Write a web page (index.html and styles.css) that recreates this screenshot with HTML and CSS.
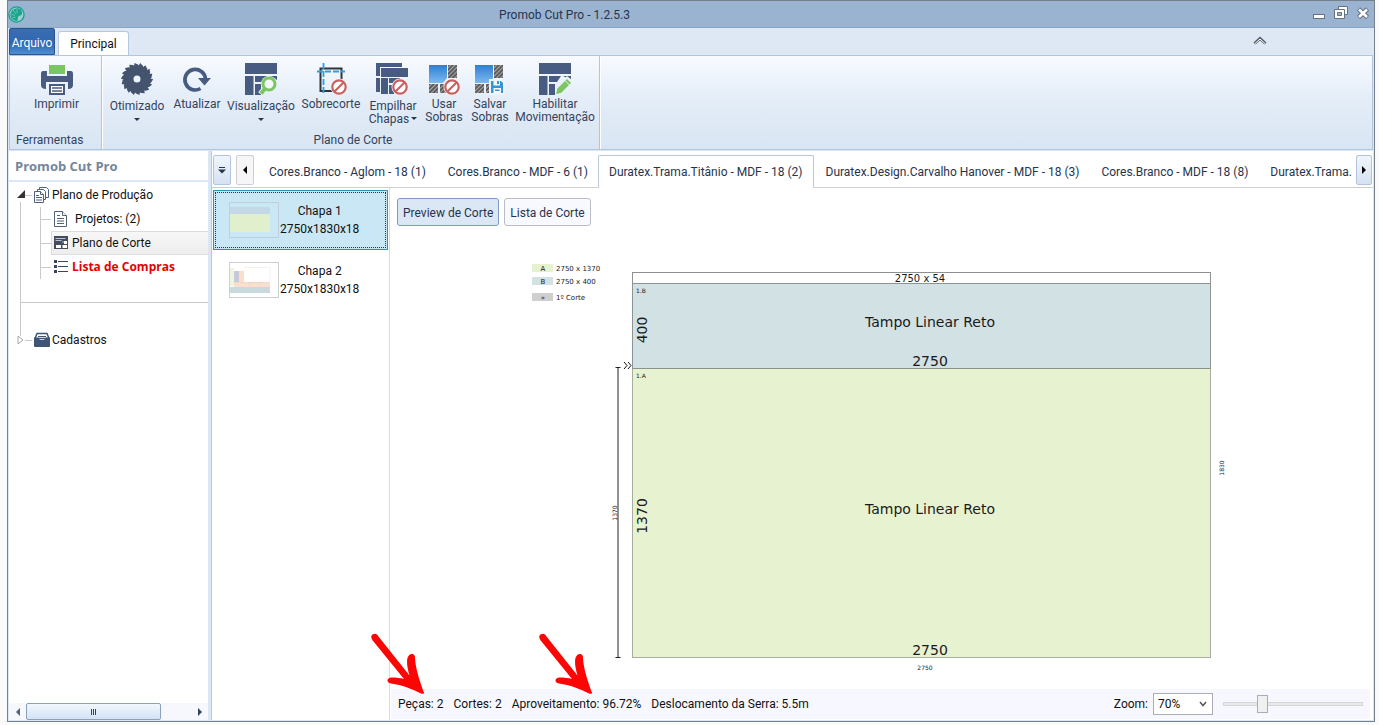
FILE: index.html
```html
<!DOCTYPE html>
<html lang="pt-BR">
<head>
<meta charset="utf-8">
<title>Promob Cut Pro - 1.2.5.3</title>
<link rel="stylesheet" href="styles.css">
</head>
<body>
<svg class="defs" aria-hidden="true">
  <defs>
    <linearGradient id="blue" x1="0" y1="0" x2="0" y2="1"><stop offset="0" stop-color="#2f7fd0"/><stop offset="1" stop-color="#7db9f0"/></linearGradient>
    <pattern id="hatch" width="3" height="3" patternUnits="userSpaceOnUse" patternTransform="rotate(45)"><rect width="3" height="3" fill="#aaa"/><rect width="2" height="3" fill="#5c5c5c"/></pattern>
    <path id="tooth" d="M-3 -12.5 L-2.5 -16 L1 -14.5 L3 -12Z"/>
    <g id="deny"><circle cx="24" cy="24" r="8.5" fill="#f3f7fc"/><circle cx="24" cy="24" r="6.7" fill="#fff" stroke="#c96060" stroke-width="2.2"/><path d="M19.5 28.5 28.5 19.5" stroke="#c96060" stroke-width="2.2"/></g>
    <g id="scraps"><path d="M1 2h18v13l-4 5H1z" fill="url(#blue)"/><path d="M20 2h9v13h-9zM1 21h9v9H1zM12 21h7v9h-7z" fill="url(#hatch)"/></g>
    <g id="boards"><path d="M0 0H32V11H0ZM0 13H8.500V32H0ZM10 13H22L18 19H10ZM10 21H16V32H10ZM24 13H32V17Z" fill="#475c80"/></g>
    <path id="arrow" d="M3.500 3.500C6.500 2 8 3 9.500 5.500L40.500 44.500C38 36 37 28 39.500 25C42 21.500 46.500 23 46 27C46.500 36 49 45 54.500 60.500C56 63 54 63.500 51 62C43 58 33 54 22 52.500C17 51.500 17.500 47 22.500 46.500C27 46.500 32 47 35 48L4.500 10.500C2 7.500 1.500 5 3.500 3.500Z" fill="#fb0505"/>
  </defs>
</svg>
<div class="window">
  <header class="titlebar">
    <svg class="logo" width="17" height="17" viewBox="0 0 17 17"><circle cx="8.500" cy="8.500" r="7.600" fill="#9fd0cf" stroke="#16a08d" stroke-width="1.300"/><path d="M8 2.500C12 1.500 15 5 14 8C13.500 10 11 9 10 11L9.500 15C4 15 2 11 2.500 8C3 5 5 3 8 2.500Z" fill="#1ba690"/><path d="M5 4 8 8M3 8 7 9.500M4 12 7.500 11M9 3V7" stroke="#9fd0cf" stroke-width=".6"/></svg>
    <h1 class="title">Promob Cut Pro - 1.2.5.3</h1>
    <div class="winbtns">
      <button aria-label="Minimizar"><svg width="14" height="14"><rect x="1.500" y="8.500" width="11" height="4" fill="#fff" stroke="#66727f"/></svg></button>
      <button aria-label="Restaurar"><svg width="14" height="14"><path d="M4.500.5h9v8h-9z" fill="#fff" stroke="#66727f"/><path d="M.5 3.500h10v9H.5z" fill="#fff" stroke="#66727f"/><path d="M3.500 6.500h4v3h-4z" fill="#9ab3d0" stroke="#66727f"/></svg></button>
      <button aria-label="Fechar"><svg width="14" height="14"><path d="M2.500 3 11.500 11.500M11.500 3 2.500 11.500" stroke="#66727f" stroke-width="4.500"/><path d="M3 3.500 11 11M11 3.500 3 11" stroke="#fff" stroke-width="2.500"/></svg></button>
    </div>
  </header>
  <nav class="ribbontabs">
    <button class="filetab">Arquivo</button>
    <button class="maintab">Principal</button>
    <button class="collapse" aria-label="Recolher"><svg width="14" height="9"><path d="M1.500 7.500 7 2.500 12.500 7.500" fill="none" stroke="#555c66" stroke-width="3"/><path d="M2 7.500 7 3 12 7.500" fill="none" stroke="#fff" stroke-width="1"/></svg></button>
  </nav>
  <section class="ribbon">
    <div class="group tools">
      <div class="items">
        <button class="cmd w-print"><svg width="32" height="32"><path d="M8 2h16v9H8z" fill="#7cc662"/><path d="M0 11q0-3 2-3h4v5h20V8h4q2 0 2 3v11q0 4-5 4v-7H5v7q-5 0-5-4z" fill="#475c80"/><path d="M9 22h14v9H9z" fill="#fff" stroke="#475c80" stroke-width="2"/><path d="M11 25h10M11 28h10" stroke="#475c80" stroke-width="1.500"/></svg><span>Imprimir</span></button>
      </div>
      <h2>Ferramentas</h2>
    </div>
    <div class="group plan">
      <div class="items">
        <button class="cmd w-60 menu"><svg width="32" height="32"><g transform="translate(16 16)" fill="#44546f"><path fill-rule="evenodd" d="M-13.300 0a13.300 13.300 0 1 0 26.600 0a13.300 13.300 0 1 0-26.600 0M-3.500 0a3.500 3.500 0 1 0 7 0a3.500 3.500 0 1 0-7 0"/><use href="#tooth"/><use href="#tooth" transform="rotate(20)"/><use href="#tooth" transform="rotate(40)"/><use href="#tooth" transform="rotate(60)"/><use href="#tooth" transform="rotate(80)"/><use href="#tooth" transform="rotate(100)"/><use href="#tooth" transform="rotate(120)"/><use href="#tooth" transform="rotate(140)"/><use href="#tooth" transform="rotate(160)"/><use href="#tooth" transform="rotate(180)"/><use href="#tooth" transform="rotate(200)"/><use href="#tooth" transform="rotate(220)"/><use href="#tooth" transform="rotate(240)"/><use href="#tooth" transform="rotate(260)"/><use href="#tooth" transform="rotate(280)"/><use href="#tooth" transform="rotate(300)"/><use href="#tooth" transform="rotate(320)"/><use href="#tooth" transform="rotate(340)"/></g></svg><span>Otimizado</span><i class="caret"></i></button>
        <button class="cmd w-60"><svg width="32" height="32"><path d="M19.500 25.500A10.300 10.300 0 1 1 24.500 16" fill="none" stroke="#475c80" stroke-width="3.700"/><path d="M17 15H30L23.500 22.500Z" fill="#475c80"/></svg><span>Atualizar</span></button>
        <button class="cmd w-68 menu"><svg width="32" height="32"><use href="#boards"/><circle cx="24" cy="21" r="8" fill="#e9f0f9"/><path d="M19.500 26 15.500 31" stroke="#e9f0f9" stroke-width="6"/><circle cx="24" cy="21" r="6" fill="#f2f7fc" stroke="#7cc662" stroke-width="3"/><path d="M20 25.500 16 30.500" stroke="#7cc662" stroke-width="4"/></svg><span>Visualização</span><i class="caret"></i></button>
        <button class="cmd w-72"><svg width="32" height="32"><path d="M5.500 5.500H26.500V28H5.500Z" fill="none" stroke="#30343b" stroke-width="2"/><path d="M8.500 0V32M2 8.500H30" stroke="#2ea0e0" stroke-width="1.800" stroke-dasharray="6 2"/><use href="#deny"/></svg><span>Sobrecorte</span></button>
        <button class="cmd w-52 menu"><svg width="34" height="32"><path d="M0 0H26V4H4V13H0ZM0 15H4V29H0ZM5 5H32V14H5ZM5 15H12V31H5ZM13 15H24V20H13ZM13 22H18V31H13Z" fill="#475c80"/><use href="#deny"/></svg><span>Empilhar<br>Chapas<i class="caret side"></i></span></button>
        <button class="cmd w-50"><svg width="32" height="32"><use href="#scraps"/><use href="#deny"/></svg><span>Usar<br>Sobras</span></button>
        <button class="cmd w-42"><svg width="32" height="32"><use href="#scraps"/><path d="M15 16H31V32H15Z" fill="#eef4fb"/><path d="M17 18H27L29 20V30H17Z" fill="#3297d4"/><path d="M19.500 18H26V22.500H19.500ZM19.500 25H27V30H19.500Z" fill="#f4f8fc"/><path d="M23 18H25V21H23ZM21 26.500H25.500V28H21Z" fill="#3297d4"/></svg><span>Salvar<br>Sobras</span></button>
        <button class="cmd w-88"><svg width="32" height="32"><use href="#boards"/><path d="M16 32V26L28 13 34 18 22 32Z" fill="#e9f0f9"/><path d="M17 31 18.500 25.500 28 16 32 20 22 30Z" fill="#7cc662"/><path d="M26 17.500 30.500 22" stroke="#e9f0f9"/></svg><span>Habilitar<br>Movimentação</span></button>
      </div>
      <h2>Plano de Corte</h2>
    </div>
  </section>
  <div class="body">
    <aside class="sidebar">
      <h2 class="sidetitle">Promob Cut Pro</h2>
      <ul class="tree">
        <li class="node root open"><i class="expander"></i>
          <svg width="16" height="16" fill="#fff" stroke="#50617a"><path d="M5.500.5h7l2 2v8h-9z"/><path d="M3.500 2.500h6l2 2v8h-8z"/><path d="M.5 4.500h6l3 3v8h-9z"/><path d="M6.500 4.500v3h3M2 8.500h3M2 10.500h6M2 13h6"/></svg>Plano de Produção</li>
        <li class="node child"><svg width="16" height="16" fill="#fff" stroke="#50617a"><path d="M1.500.5h8l4 4v11h-12z"/><path d="M9.500.5v4h4M4 4.500h3M4 7.500h7M4 10h7M4 12.500h7"/></svg><span class="indent">Projetos: (2)</span></li>
        <li class="node child selected"><svg width="16" height="16"><path d="M1 1h14v13H1z" fill="#444c5d"/><path d="M2.500 5.500h6M2.500 3.500h10M9 7h3" stroke="#b9c3d3"/><path d="M3 10h5v3H3zM9.500 10H14v3H9.500zM11 6h3v3h-3z" fill="#fff"/></svg>Plano de Corte</li>
        <li class="node child shopping"><svg width="16" height="16"><path d="M1 1h3v3H1zM1 6h3v3H1zM1 11h3v3H1z" fill="#37445c"/><path d="M5 2.500h10M5 7.500h10M5 12.500h10" stroke="#37445c"/></svg>Lista de Compras</li>
        <li class="gap"></li>
        <li class="node root closed"><i class="expander"><svg width="7" height="10"><path d="M1 1V9L6 5Z" fill="#fff" stroke="#a9a9a9"/></svg></i><svg width="16" height="16"><path d="M3 1.500h10l2 5H1z" fill="#fff" stroke="#3f5474" stroke-width="1.500"/><path d="M0 5.500h4l2 2.500h4l2-2.500h4V14q0 1-1 1H1q-1 0-1-1z" fill="#3f5474"/><path d="M4 4.500h8" stroke="#3f5474"/></svg>Cadastros</li>
      </ul>
      <div class="hscroll">
        <button class="sbtn" aria-label="Rolar para a esquerda"><svg width="6" height="8"><path d="M5 0V8L1 4Z" fill="#4b5f80"/></svg></button>
        <div class="track"><div class="thumb"><svg width="7" height="8"><path d="M1.500 1v6M3.500 1v6M5.500 1v6" stroke="#33415a"/></svg></div></div>
        <button class="sbtn" aria-label="Rolar para a direita"><svg width="6" height="8"><path d="M1 0V8L5 4Z" fill="#33415a"/></svg></button>
      </div>
    </aside>
    <main class="main">
      <nav class="doctabs">
        <button class="tabbtn blue" aria-label="Lista de abas"><svg width="8" height="7"><path d="M1 .5h6" stroke="#26344d"/><path d="M0 2.500h8L4 6.500Z" fill="#26344d"/></svg></button>
        <button class="tabbtn prev" aria-label="Anterior"><svg width="6" height="8"><path d="M5 0V8L1 4Z" fill="#000"/></svg></button>
        <div class="tablist">
          <button>Cores.Branco - Aglom - 18 (1)</button>
          <button>Cores.Branco - MDF - 6 (1)</button>
          <button class="active">Duratex.Trama.Titânio - MDF - 18 (2)</button>
          <button>Duratex.Design.Carvalho Hanover - MDF - 18 (3)</button>
          <button>Cores.Branco - MDF - 18 (8)</button>
          <button>Duratex.Trama.Titânio - MDF - 6 (1)</button>
        </div>
        <button class="tabbtn blue next" aria-label="Próxima"><svg width="6" height="8"><path d="M1 0V8L5 4Z" fill="#000"/></svg></button>
      </nav>
      <div class="workspace">
        <div class="sheets">
          <button class="sheet current"><svg width="50" height="36"><rect x=".5" y=".5" width="49" height="35" fill="#c9e7f5" stroke="#bfd0da"/><path d="M1 5h40v7H1z" fill="#c3dae6"/><path d="M1 12h40v18H1z" fill="#e1efcd"/></svg><span>Chapa 1<br>2750x1830x18</span></button>
          <button class="sheet"><svg width="50" height="36"><rect x=".5" y=".5" width="49" height="35" fill="#fff" stroke="#cfcfcf"/><path d="M1 6h4v18H1z" fill="#edf5df"/><path d="M5 9h5v11H5z" fill="#c7c8d8"/><path d="M10 9h5v11h-5zM5 20h36v5H5z" fill="#fae0cc"/><path d="M1 25h40v6H1z" fill="#c8dadd"/><path d="M5 20.500h36M20.500 20v5M31 20v5" fill="none" stroke="#eed9c8"/><path d="M15 5.500h26V20" fill="none" stroke="#f5f2f0"/></svg><span>Chapa 2<br>2750x1830x18</span></button>
        </div>
        <div class="content">
          <div class="modes"><button class="on">Preview de Corte</button><button>Lista de Corte</button></div>
          <div class="canvas">
            <svg class="drawing" viewBox="0 0 983 459" role="img" aria-label="Plano de corte 2750 x 1830">
              <rect x="142" y="34" width="21" height="8" fill="#e6f1cf"/><rect x="142" y="47" width="21" height="8" fill="#d2e1e4"/><rect x="142" y="63" width="21" height="8" fill="#cfcfcf"/>
              <g class="t7"><text class="mid" x="153" y="41">A</text><text class="mid" x="153" y="54">B</text><text class="mid" x="153" y="70">»</text><text x="166" y="41">2750 x 1370</text><text x="166" y="54">2750 x 400</text><text x="166" y="70">1º Corte</text></g>
              <rect x="242.500" y="42.500" width="578" height="11" fill="#fff" stroke="#8c9090"/>
              <rect x="242.500" y="53.500" width="578" height="85" fill="#d2e1e4" stroke="#8c9393"/>
              <rect x="242.500" y="138.500" width="578" height="289" fill="#e7f2d1" stroke="#a7ae9f"/>
              <path d="M242 138.500h579" stroke="#8a938a"/>
              <path d="M228 137.500v290M225.500 137.500h5M225.500 427.500h5" stroke="#222" fill="none"/>
              <path d="M234 132 237 135.500 234 139M238 132 241 135.500 238 139" stroke="#111" fill="none"/>
              <g class="t6"><text x="246" y="63">1.B</text><text x="246" y="148">1.A</text><text class="mid" x="535" y="440">2750</text><text class="mid" transform="translate(227 283) rotate(-90)">1370</text><text class="mid" transform="translate(834 238) rotate(-90)">1830</text></g>
              <g class="t10 mid"><text x="530" y="52">2750 x 54</text></g>
              <g class="t14 mid"><text x="540" y="97">Tampo Linear Reto</text><text x="540" y="136">2750</text><text x="540" y="284">Tampo Linear Reto</text><text x="540" y="425">2750</text><text transform="translate(257 100) rotate(-90)">400</text><text transform="translate(257 286) rotate(-90)">1370</text></g>
            </svg>
          </div>
          <footer class="status">
            <span class="stat pieces">Peças: 2<svg class="pointer" width="58" height="66" aria-hidden="true"><use href="#arrow"/></svg></span>
            <span class="stat">Cortes: 2</span>
            <span class="stat yield">Aproveitamento: 96.72%<svg class="pointer" width="58" height="66" aria-hidden="true"><use href="#arrow"/></svg></span>
            <span class="stat">Deslocamento da Serra: 5.5m</span>
            <label class="zoomlabel" for="zoom">Zoom:</label>
            <span class="combo"><select id="zoom"><option>70%</option><option>100%</option></select><svg width="8" height="6"><path d="M1 1 4 4.500 7 1" fill="none" stroke="#555" stroke-width="1.500"/></svg></span>
            <input class="slider" type="range" min="0" max="100" value="26" aria-label="Zoom">
          </footer>
        </div>
      </div>
    </main>
  </div>
</div>
</body>
</html>
```
FILE: styles.css
```css
* { box-sizing: border-box; }
body { margin: 0; background: #fafafa; font: 12px/16px Roboto, "Open Sans", sans-serif; color: #111; }
button { font: inherit; color: inherit; background: none; border: 0; padding: 0; margin: 0; white-space: nowrap; }
h1, h2, ul { margin: 0; padding: 0; font-size: inherit; font-weight: normal; list-style: none; }
svg { display: block; flex: none; }
.defs { position: absolute; width: 0; height: 0; }
.window { display: flex; flex-direction: column; height: calc(100vh - 3px); min-height: 480px; margin: 0 4px 3px 7px; border: 1px solid #76808c; background: #dce7f5; }

.titlebar { display: flex; align-items: center; height: 27px; padding: 0 4px 0 0; background: #9ab3d0; border-bottom: 1px solid #8ba5c4; }
.title { flex: 1; padding: 2px 208px 0 0; text-align: center; color: #26344d; }
.winbtns { display: flex; gap: 8px; padding-bottom: 2px; }

.ribbontabs { display: flex; align-items: flex-end; height: 27px; background: #dee8f5; }
.filetab { align-self: stretch; width: 46px; margin-left: 1px; padding-top: 2px; color: #fff; background: linear-gradient(#3a6cb0, #3068b4 60%, #4f8ed2); border: 1px solid #2a5590; border-radius: 2px 2px 0 0; }
.maintab { width: 71px; height: 24px; margin-left: 3px; background: #fff; border: 1px solid #b5c8de; border-bottom: 0; border-radius: 3px 3px 0 0; }
.collapse { margin: 0 107px 10px auto; }

.ribbon { display: flex; flex: none; height: 95px; margin: 0 1px; border: 1px solid #b3c5dd; background: linear-gradient(#f8fbff, #e4edf8 45%, #d9e5f3); color: #33435c; }
.group { display: flex; flex-direction: column; justify-content: space-between; border-right: 1px solid #b3c5dd; box-shadow: 1px 0 #fff; }
.group h2 { line-height: 18px; }
.tools { width: 92px; padding-left: 2px; }
.tools h2 { padding: 0 4px; }
.plan { margin-left: 1px; padding-left: 4px; }
.plan h2 { text-align: center; }
.items { display: flex; padding-top: 7px; }
.cmd { display: flex; flex-direction: column; align-items: center; gap: 3px; line-height: 13px; }
.cmd.menu { gap: 5px; }
.w-print { width: 100%; }
.w-60 { width: 60px; }
.w-68 { width: 68px; }
.w-72 { width: 72px; }
.w-52 { width: 52px; }
.w-50 { width: 50px; }
.w-42 { width: 42px; }
.w-88 { width: 88px; }
.caret { display: inline-block; width: 0; height: 0; border: 3px solid transparent; border-top-color: #26344d; border-bottom: 0; }
.caret.side { margin-left: 2px; vertical-align: 3px; }

.body { display: flex; flex: 1; min-height: 0; margin: 1px 1px; }
.sidebar { display: flex; flex-direction: column; width: 199px; flex: none; background: #fff; }
.sidetitle { height: 31px; padding: 0 6px; border-bottom: 2px solid #dce7f5; color: #74859a; font: 700 13px/30px "Open Sans", sans-serif; }
.tree { flex: 1; padding-top: 1px; background: linear-gradient(#c9c9c9, #c9c9c9) 11px 20px / 1px 134px no-repeat; }
.node { display: flex; align-items: center; height: 24px; }
.root { gap: 2px; padding-left: 8px; }
.expander { width: 15px; height: 10px; background: linear-gradient(#c9c9c9, #c9c9c9) 100% 50% / 7px 1px no-repeat; }
.open .expander::before { content: ""; display: block; border-left: 8px solid transparent; border-bottom: 8px solid #333; width: 0; }
.child { gap: 3px; margin-left: 31px; padding-left: 12px; background: linear-gradient(#c9c9c9, #c9c9c9) 0 50% / 10px 1px no-repeat; border-left: 1px solid #c9c9c9; }
.child .indent { padding-left: 3px; }
.selected { background: linear-gradient(#c9c9c9, #c9c9c9) 0 50% / 10px 1px no-repeat, linear-gradient(#dcdcdc, #dcdcdc) 10px 0 / 100% 1px no-repeat, linear-gradient(#dcdcdc, #dcdcdc) 10px 100% / 100% 1px no-repeat, linear-gradient(#dcdcdc, #dcdcdc) 10px 0 / 1px 100% no-repeat, linear-gradient(#f7f7f7, #ededed) 10px 0 / 100% 100% no-repeat; }
.shopping { color: #e60000; font-family: "Open Sans", sans-serif; font-weight: 700; }
.gap { height: 49px; margin-left: 11px; background: linear-gradient(#c9c9c9, #c9c9c9) 0 23px / 100% 1px no-repeat; }
.hscroll { display: flex; height: 17px; background: #f6f8fd; }
.sbtn { display: flex; width: 17px; align-items: center; justify-content: center; }
.track { flex: 1; }
.thumb { display: flex; width: 82%; height: 17px; align-items: center; justify-content: center; border: 1px solid #8c9fbd; border-radius: 2px; background: linear-gradient(#f2f7fd, #d3e2f5); }

.main { display: flex; flex: 1; min-width: 0; flex-direction: column; margin-left: 3px; background: #fff; border-left: 1px solid #b9c7d9; }
.doctabs { display: flex; height: 37px; padding: 4px 1px 0; border-bottom: 1px solid #cfcfd2; color: #26344d; }
.tabbtn { display: flex; flex: none; width: 18px; height: 30px; align-items: center; justify-content: center; border: 1px solid #cfcfd2; border-radius: 2px; background: #f6f6f6; }
.tabbtn.blue { border-color: #b3c5dd; background: linear-gradient(#f0f5fc, #d5e2f2); }
.tabbtn.prev { margin: 0 3px 0 5px; }
.tabbtn.next { width: 16px; margin-left: 4px; }
.tablist { display: flex; flex: 1; height: 33px; overflow: hidden; }
.tablist button { flex: none; padding: 0 10px 0 12px; }
.tablist .active { border: 1px solid #b9c7d9; border-bottom-color: #fff; border-radius: 2px 2px 0 0; background: #fff; padding: 0 10px; }
.workspace { display: flex; flex: 1; min-height: 0; }
.sheets { display: flex; flex: none; width: 178px; flex-direction: column; padding: 2px 1px; border-right: 1px solid #dcdcdc; }
.sheet { display: flex; align-items: center; gap: 1px; height: 60px; padding-left: 15px; border: 1px solid transparent; line-height: 18px; }
.sheet.current { border-color: #2a93b5; background: #c9e7f5; outline: 1px dotted #234; outline-offset: -3px; }
.content { display: flex; flex: 1; min-width: 0; flex-direction: column; }
.modes { display: flex; gap: 5px; padding: 10px 7px 4px; color: #26344d; }
.modes button { height: 28px; padding: 2px 5px 0; border: 1px solid #bcbcc6; border-radius: 3px; background: #f8f9ff; }
.modes .on { border-color: #7d9ac4; background: #dce7f5; }
.canvas { display: flex; flex: 1; min-height: 0; }
.drawing { width: 100%; height: 100%; font-family: "DejaVu Sans", sans-serif; fill: #1a1a1a; }
.t6 { font-size: 6px; }
.t7 { font-size: 7px; }
.t10 { font-size: 10px; }
.t14 { font-size: 14px; }
.mid { text-anchor: middle; }
.status { display: flex; flex: none; align-items: center; height: 30px; margin: 0 3px 1px 1px; padding: 0 7px; gap: 10px; background: #f7f8ff; white-space: nowrap; }
.stat { position: relative; }
.pointer { position: absolute; bottom: 15px; }
.pieces .pointer { right: 17px; }
.yield .pointer { right: 46px; }
.zoomlabel { margin-left: auto; }
.combo { display: flex; align-items: center; width: 60px; height: 22px; margin-left: -5px; padding-right: 5px; border: 1px solid #abadb3; background: #fff; }
.combo select { flex: 1; min-width: 0; padding: 0 4px; border: 0; background: none; appearance: none; font: inherit; color: inherit; }
.slider { width: 140px; height: 18px; margin: 0; appearance: none; background: none; }
.slider::-webkit-slider-runnable-track { height: 4px; border: 1px solid #d6d6d6; background: #e7eaea; }
.slider::-webkit-slider-thumb { appearance: none; width: 11px; height: 18px; margin-top: -8px; border: 1px solid #acacac; background: #f0f0f0; }
```
